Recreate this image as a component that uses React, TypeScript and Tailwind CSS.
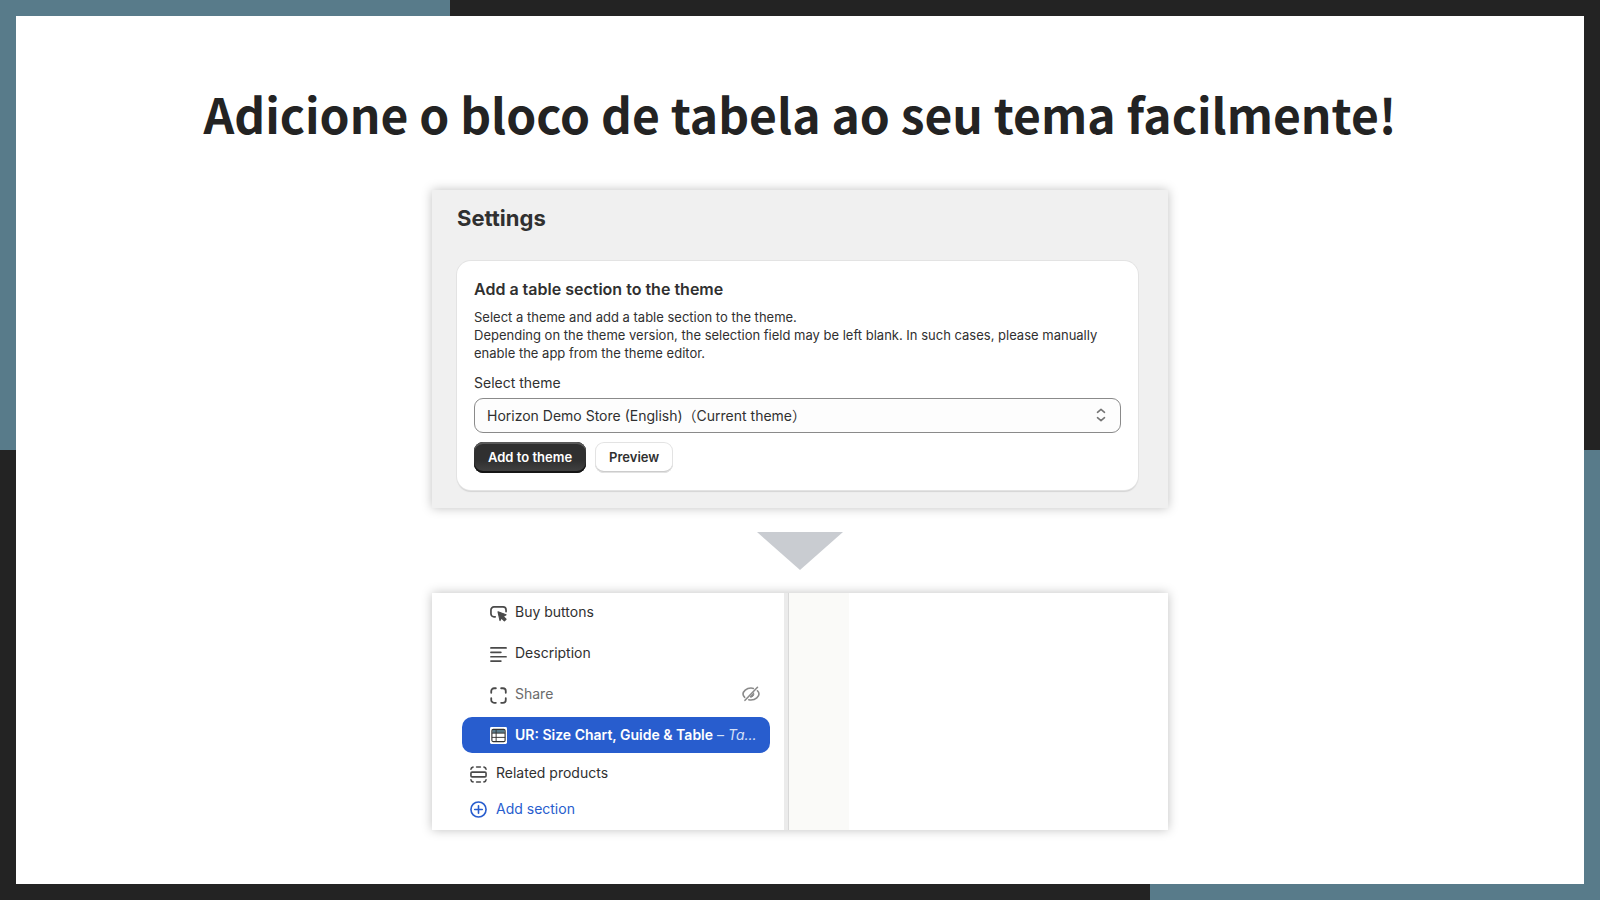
import React from 'react';

interface IconProps {
  className?: string;
}

function BuyButtonsIcon({ className }: IconProps) {
  return (
    <svg viewBox="0 0 18 18" className={className} fill="none" stroke="currentColor" strokeWidth="1.8" strokeLinecap="round" strokeLinejoin="round">
      <path d="M5.5 12.5H4.2A3.2 3.2 0 0 1 1 9.3V5.2A3.2 3.2 0 0 1 4.2 2h9.6A3.2 3.2 0 0 1 17 5.2v1.8" />
      <path d="M8.5 7.2l8.500 3.200-3 1.700 3 3-1.800 1.800-3.100-3.100-1.500 2.700z" fill="currentColor" strokeWidth="1.200" />
    </svg>
  );
}

function DescriptionIcon({ className }: IconProps) {
  return (
    <svg viewBox="0 0 18 18" className={className} fill="none" stroke="currentColor" strokeWidth="1.8" strokeLinecap="round">
      <path d="M1 2h16M1 6.700h10.500M1 11.400h16M1 16h10.500" />
    </svg>
  );
}

function ShareIcon({ className }: IconProps) {
  return (
    <svg viewBox="0 0 18 18" className={className} fill="none" stroke="currentColor" strokeWidth="1.9" strokeLinecap="round">
      <path d="M6.200 1.300H4.300a3 3 0 0 0-3 3v1.900M11.800 1.300h1.900a3 3 0 0 1 3 3v1.900M6.200 16.700H4.300a3 3 0 0 1-3-3v-1.900M11.800 16.700h1.900a3 3 0 0 0 3-3v-1.900" />
    </svg>
  );
}

function TableAppIcon({ className }: IconProps) {
  return (
    <svg viewBox="0 0 18 18" className={className} fill="none">
      <rect width="18" height="18" rx="1.500" fill="#fff" />
      <path d="M2.500 3h13v3.500h-13z" fill="#587b8a" />
      <rect x="2" y="2.500" width="14" height="13" rx="1.500" stroke="#333" strokeWidth="1.200" />
      <path d="M2 6.500h14M2 11h14M6.500 2.500v13" stroke="#333" strokeWidth="1" />
    </svg>
  );
}

function SectionIcon({ className }: IconProps) {
  return (
    <svg viewBox="0 0 18 18" className={className} fill="none" stroke="currentColor" strokeWidth="1.7" strokeLinecap="round">
      <rect x="1" y="6.500" width="16" height="5" rx="1.200" />
      <path d="M1 3.500A2.500 2.500 0 0 1 3.200 1.200M7 1h4M14.800 1.200A2.500 2.500 0 0 1 17 3.500M1 14.500a2.500 2.500 0 0 0 2.200 2.300M7 17h4M14.800 16.800a2.500 2.500 0 0 0 2.200-2.300" />
    </svg>
  );
}

function AddIcon({ className }: IconProps) {
  return (
    <svg viewBox="0 0 18 18" className={className} fill="none" stroke="currentColor" strokeWidth="1.7" strokeLinecap="round">
      <circle cx="9" cy="9" r="8" />
      <path d="M9 5v8M5 9h8" />
    </svg>
  );
}

function HiddenIcon({ className }: IconProps) {
  return (
    <svg viewBox="0 0 18 18" className={className} fill="none" stroke="currentColor" strokeWidth="1.6" strokeLinecap="round" strokeLinejoin="round">
      <path d="M2.700 12.300C1.500 11.200 1 9.900 1 9c0-2.300 3.200-6 8-6 .9 0 1.700.1 2.400.4M15.400 5.800C16.500 6.900 17 8.100 17 9c0 2.300-3.200 6-8 6-.8 0-1.500-.1-2.200-.3" />
      <path d="M15.500 2.300L3 15.300" />
      <path d="M11.700 8.200L8 12a3 3 0 0 0 3.700-3.800z" fill="currentColor" strokeWidth="1" />
    </svg>
  );
}

function SelectIcon({ className }: IconProps) {
  return (
    <svg viewBox="0 0 10 14" className={className} fill="none" stroke="currentColor" strokeWidth="1.6" strokeLinecap="round" strokeLinejoin="round">
      <path d="M1.500 4.300L5 1.300l3.500 3M1.500 9.700l3.500 3 3.500-3" />
    </svg>
  );
}

interface BlockRowProps {
  icon: React.ElementType;
  label: string;
  muted?: boolean;
}

function BlockRow({ icon: Icon, label, muted }: BlockRowProps) {
  return (
    <li className="mb-[5px] flex items-center h-9 pl-7 pr-[10px]">
      <button type="button" className={muted ? 'flex flex-1 items-center gap-2 text-[#6b6b6b]' : 'flex flex-1 items-center gap-2 text-[#303030]'}>
        <Icon className="w-[17px] h-[17px] mt-0.5 text-[#4a4a4a]" />
        {label}
      </button>
      {muted && (
        <button type="button" aria-label="Show block" className="text-[#8a8a8a]">
          <HiddenIcon className="w-[18px] h-[18px]" />
        </button>
      )}
    </li>
  );
}

function SettingsPanel() {
  return (
    <section className="w-full bg-[#f0f0f0] pl-[25px] pr-[30px] pt-[14px] pb-[18px] shadow-[0_0_10px_rgba(0,0,0,0.25)]">
      <h2 className="text-[22px] leading-7 font-bold text-[#303030]">Settings</h2>
      <div className="mt-[29px] rounded-[14px] bg-white px-[17px] pt-[18px] pb-[17px] shadow-[0_0_0_1px_#e3e3e3,0_2px_1px_#d4d4d4]">
        <h3 className="text-[16px] leading-5 font-semibold text-[#303030]">Add a table section to the theme</h3>
        <p className="mt-[9px] text-[13px] leading-[18px] text-[#303030]">
          Select a theme and add a table section to the theme.
          <br />
          Depending on the theme version, the selection field may be left blank. In such cases, please manually enable the
          app from the theme editor.
        </p>
        <label htmlFor="theme" className="mt-[11px] block text-[14px] leading-5 text-[#303030]">
          Select theme
        </label>
        <div className="relative mt-[5px]">
          <select
            id="theme"
            className="block w-full h-[35px] appearance-none rounded-[9px] border border-[#8a8a8a] bg-[#fdfdfd] pl-3 pr-8 text-[14px] text-[#303030]"
          >
            <option>Horizon Demo Store (English)（Current theme）</option>
          </select>
          <SelectIcon className="pointer-events-none absolute right-[15px] top-[10px] h-[14px] w-[10px] text-[#757575]" />
        </div>
        <div className="mt-[9px] flex gap-[9px] text-[13px] font-semibold">
          <button
            type="button"
            className="h-[31px] rounded-[9px] bg-linear-to-b from-[#303030] from-60% to-[#444444] px-[14px] text-white shadow-[inset_0_2px_0_#5a5a5a,inset_0_-2px_0_#151515,inset_0_0_0_1px_#303030]"
          >
            Add to theme
          </button>
          <button
            type="button"
            className="h-[31px] rounded-[9px] bg-white px-[14px] text-[#303030] shadow-[inset_0_0_0_1px_#e3e3e3,inset_0_-2px_0_#cccccc]"
          >
            Preview
          </button>
        </div>
      </div>
    </section>
  );
}

function EditorPanel() {
  return (
    <section className="flex w-full bg-white text-[14px] leading-5 shadow-[0_0_10px_rgba(0,0,0,0.25)]">
      <ul className="w-[352px] pl-[30px] pr-[14px] pt-px pb-[3px]">
        <BlockRow icon={BuyButtonsIcon} label="Buy buttons" />
        <BlockRow icon={DescriptionIcon} label="Description" />
        <BlockRow icon={ShareIcon} label="Share" muted />
        <li>
          <button type="button" className="flex h-9 w-full items-center gap-2 rounded-[10px] bg-[#285dce] pl-7 text-white">
            <TableAppIcon className="w-[17px] h-[17px] shrink-0" />
            <span className="whitespace-nowrap">
              <span className="font-semibold">UR: Size Chart, Guide &amp; Table</span>
              <span className="text-[#d5e0f8]"> – <i>Ta...</i></span>
            </span>
          </button>
        </li>
        <li className="mt-0.5 flex h-9 items-center pl-2">
          <button type="button" className="flex items-center gap-[9px] text-[#303030]">
            <SectionIcon className="w-[17px] h-[17px] mt-0.5 text-[#4a4a4a]" />
            Related products
          </button>
        </li>
        <li className="flex h-9 items-center pl-2">
          <button type="button" className="flex items-center gap-[9px] text-[#285dce]">
            <AddIcon className="w-[17px] h-[17px]" />
            Add section
          </button>
        </li>
      </ul>
      <div className="w-[5px] border-r border-[#d9d9d9] bg-[#ebebeb]" />
      <div className="w-[60px] bg-[#fafaf8]" />
    </section>
  );
}

export default function App() {
  return (
    <div className="grid min-h-screen bg-[#232323] font-['Inter','Noto_Sans_CJK_JP',sans-serif]">
      <div className="[grid-area:1/1] size-[50vh] bg-[#587b8a]" />
      <div className="[grid-area:1/1] size-[50vh] self-end justify-self-end bg-[#587b8a]" />
      <main className="[grid-area:1/1] m-4 flex flex-col items-center bg-white px-6 pt-[61px] pb-8">
        <h1 className="text-center text-[48px] leading-[72px] font-bold text-[#232323] font-['Noto_Sans_CJK_JP','Noto_Sans',sans-serif]">
          Adicione o bloco de tabela ao seu tema facilmente!
        </h1>
        <div className="mt-[41px] flex w-full max-w-[736px] flex-col items-center">
          <SettingsPanel />
          <svg viewBox="0 0 86 38" className="mt-6 mb-[23px] h-[38px] w-[86px]" fill="#c9ccd1">
            <path d="M0 0h86L43 38z" />
          </svg>
          <EditorPanel />
        </div>
      </main>
    </div>
  );
}
